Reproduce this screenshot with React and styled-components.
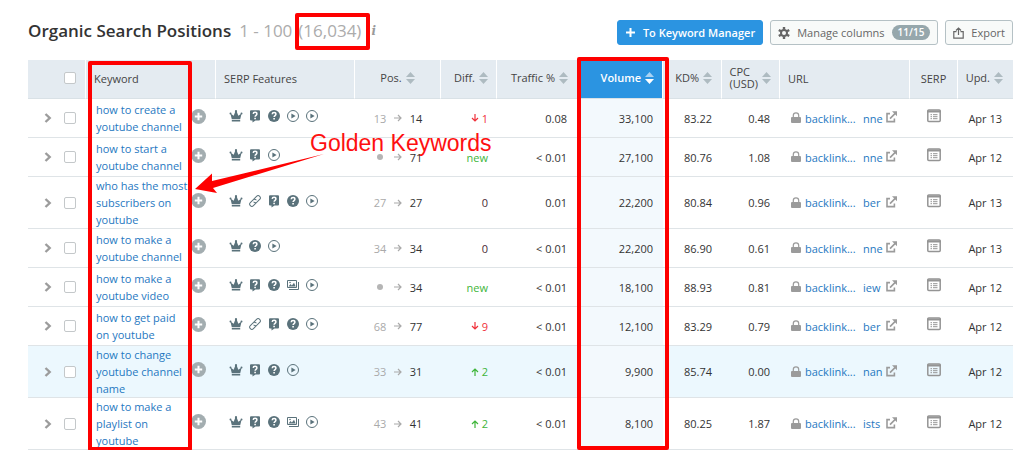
import React from 'react';
import styled, { createGlobalStyle } from 'styled-components';

const GlobalStyle = createGlobalStyle`
  * {
    box-sizing: border-box;
  }

  body {
    margin: 0;
    background: #fff;
    color: #333;
    font-family: 'Open Sans', 'Noto Sans', sans-serif;
    font-size: 11px;
    line-height: 17px;
  }

  svg {
    display: block;
    flex-shrink: 0;
  }
`;

const Page = styled.main`
  padding: 20px 11px 0 28px;
`;

const Toolbar = styled.header`
  display: flex;
  align-items: center;
  justify-content: space-between;
  min-height: 25px;
  margin-bottom: 15px;
`;

const Title = styled.h1`
  display: flex;
  align-items: center;
  margin: 0;
  padding-bottom: 3px;
  color: #333;
  font-size: 17px;
  font-weight: 600;
  line-height: 22px;
  white-space: nowrap;
`;

const Range = styled.span`
  margin-left: 8px;
  color: #acacac;
  font-weight: 400;
`;

const Total = styled.span`
  position: relative;
  margin-left: 6px;
  color: #acacac;
  font-weight: 400;

  &::after {
    content: '';
    position: absolute;
    inset: -7px -9px -8px -3px;
    border: 4px solid #fe0000;
    border-radius: 2px;
  }
`;

const Info = styled.span`
  margin-left: 10px;
  color: #9a9a9a;
  font-family: 'DejaVu Serif', serif;
  font-size: 12px;
  font-style: italic;
  font-weight: 700;
`;

const Actions = styled.div`
  display: flex;
  gap: 7px;
`;

const Button = styled.button`
  display: flex;
  align-items: center;
  gap: 7px;
  height: 25px;
  padding: 0 7px;
  border: 1px solid ${({ $primary }) => ($primary ? '#2b94e1' : '#b5c1c5')};
  border-radius: 3px;
  background: ${({ $primary }) => ($primary ? '#2b94e1' : '#f8faf9')};
  color: ${({ $primary }) => ($primary ? '#fff' : '#666')};
  font-family: inherit;
  font-size: 11px;
  font-weight: ${({ $primary }) => ($primary ? 600 : 400)};
  white-space: nowrap;
`;

const Badge = styled.span`
  padding: 0 6px;
  border-radius: 8px;
  background: #96a7ac;
  color: #fff;
  font-size: 10px;
  font-weight: 600;
  line-height: 15px;
`;

const TableWrap = styled.div`
  position: relative;
`;

const Table = styled.table`
  width: 100%;
  table-layout: fixed;
  border-collapse: separate;
  border-spacing: 0;
`;

const Col = styled.col`
  width: ${({ $width }) => $width};
`;

const aligns = { left: 'flex-start', center: 'center', right: 'flex-end' };

const HeadCell = styled.th`
  height: 39px;
  padding: 0 ${({ $right = 0 }) => $right}px 2px ${({ $left = 0 }) => $left}px;
  border-bottom: 1px solid #d9e1e6;
  border-right: 1px solid #fff;
  background: ${({ $active }) => ($active ? '#2b94e1' : '#e4ebf1')};
  color: ${({ $active }) => ($active ? '#fff' : '#444')};
  font-weight: ${({ $active }) => ($active ? 600 : 400)};
  text-align: ${({ $align = 'left' }) => $align};

  &:last-child {
    border-right: 0;
  }
`;

const SortButton = styled.button`
  display: flex;
  align-items: center;
  justify-content: ${({ $align }) => aligns[$align]};
  gap: 4px;
  width: 100%;
  padding: 0;
  border: 0;
  background: none;
  color: inherit;
  font: inherit;
  line-height: 12px;
  text-align: left;
  white-space: pre-line;
`;

const Row = styled.tr`
  background: ${({ $hovered }) => ($hovered ? '#ecf8fe' : '#fff')};
`;

const Cell = styled.td`
  height: 39px;
  padding: 0 ${({ $right = 0 }) => $right}px 0 ${({ $left = 0 }) => $left}px;
  border-bottom: 1px solid #dfe4e7;
  background: ${({ $active }) => ($active ? '#f3f9fd' : 'transparent')};
  text-align: ${({ $align = 'left' }) => $align};
  white-space: nowrap;
`;

const Select = styled.div`
  display: flex;
  align-items: center;
  justify-content: flex-end;
  gap: 12px;
`;

const Checkbox = styled.input`
  appearance: none;
  width: 12px;
  height: 12px;
  margin: 0;
  border: 1px solid #c4c8ca;
  border-radius: 2px;
  background: #fff;
`;

const IconButton = styled.button`
  display: inline-flex;
  flex-shrink: 0;
  padding: 0;
  border: 0;
  background: none;
  color: ${({ $color }) => $color};
`;

const KeywordBox = styled.div`
  display: flex;
  align-items: center;
  gap: 1px;
`;

const Keyword = styled.a`
  width: 94px;
  color: #1f78c1;
  text-decoration: none;
  white-space: normal;
`;

// icons sit a touch above the text line
const Lifted = styled.div`
  display: flex;
  justify-content: ${({ $align = 'left' }) => aligns[$align]};
  gap: 5px;
  padding-bottom: 4px;
  color: #5a727b;
`;

const Position = styled.div`
  display: grid;
  grid-template-columns: 14px 8px 14px;
  align-items: center;
  justify-content: center;
  justify-items: center;
  gap: 7px;
  color: #333;
`;

const Previous = styled.span`
  color: #aaa;
`;

const Dot = styled.span`
  width: 6px;
  height: 6px;
  border-radius: 50%;
  background: #b5b5b5;
`;

const diffColors = { up: '#3fb53a', new: '#3fb53a', down: '#f0303a', same: '#4a2a35' };

const Diff = styled.span`
  display: inline-flex;
  align-items: center;
  gap: 3px;
  color: ${({ $kind }) => diffColors[$kind]};
`;

const UrlBox = styled.div`
  display: flex;
  align-items: center;
  gap: 3px;
  color: #9b9b9b;
`;

const UrlLink = styled.a`
  display: grid;
  grid-template-columns: 56px 20px;
  gap: 2px;
  padding-left: 1px;
  color: #1f78c1;
  text-decoration: none;
`;

const Outline = styled.div`
  position: absolute;
  top: ${({ $top }) => $top}px;
  bottom: ${({ $bottom }) => $bottom}px;
  left: ${({ $left }) => $left};
  right: ${({ $right }) => $right};
  width: ${({ $width }) => $width}px;
  border: 4px solid #fe0000;
  border-radius: 2px;
  pointer-events: none;
`;

const Callout = styled.div`
  position: absolute;
  top: 70px;
  left: 282px;
  color: #fe1010;
  font-family: 'Liberation Sans', sans-serif;
  font-size: 23px;
  line-height: 26px;
  white-space: nowrap;
  pointer-events: none;
`;

const Pointer = styled.svg`
  position: absolute;
  top: 90px;
  left: 166px;
  pointer-events: none;
`;

const Sorter = ({ active }) => (
  <svg width="9" height="12" viewBox="0 0 9 12">
    <path d="M4.5 0 9 5H0z" fill={active ? '#a9d3f3' : '#aebbc1'} />
    <path d="M4.5 12 9 7H0z" fill={active ? '#fff' : '#aebbc1'} />
  </svg>
);

const Chevron = () => (
  <svg width="8" height="10" viewBox="0 0 8 10" fill="none" stroke="currentColor" strokeWidth="2.4">
    <path d="M1.5 1 5.7 5 1.5 9" />
  </svg>
);

const PlusCircle = () => (
  <svg width="15" height="15" viewBox="0 0 15 15">
    <circle cx="7.5" cy="7.5" r="7.5" fill="currentColor" />
    <path d="M7.5 3.8v7.4M3.8 7.5h7.4" stroke="#fff" strokeWidth="2" />
  </svg>
);

const Crown = () => (
  <svg width="14" height="14" viewBox="0 0 14 14" fill="currentColor">
    <path d="M1.400 4.400 4.700 6.800 6.500 2h1l1.800 4.800 3.300-2.400-1.400 5.900H2.800zM2.800 11h8.400v1.500H2.800z" />
    <circle cx="7" cy="2.200" r="1.100" />
    <circle cx="1.500" cy="4.400" r="1" />
    <circle cx="12.500" cy="4.400" r="1" />
  </svg>
);

const QuestionMark = () => (
  <>
    <path
      d="M5.200 5.200c.1-2.200 3.700-2.200 3.700 0 0 1.400-1.800 1.400-1.800 2.900"
      fill="none"
      stroke="#fff"
      strokeWidth="1.500"
    />
    <path d="M6.300 9h1.600v1.500H6.300z" fill="#fff" />
  </>
);

const Snippet = () => (
  <svg width="14" height="14" viewBox="0 0 14 14">
    <path
      d="M3 1.200h8a1 1 0 0 1 1 1v8.200a1 1 0 0 1-1 1H7.500L4.500 13.500v-2.100H3a1 1 0 0 1-1-1V2.200a1 1 0 0 1 1-1z"
      fill="currentColor"
    />
    <g transform="translate(0 -.3)">
      <QuestionMark />
    </g>
  </svg>
);

const Question = () => (
  <svg width="14" height="14" viewBox="0 0 14 14">
    <circle cx="7" cy="7" r="6" fill="currentColor" />
    <QuestionMark />
  </svg>
);

const Play = () => (
  <svg width="14" height="14" viewBox="0 0 14 14">
    <circle cx="7" cy="7" r="5.500" fill="none" stroke="currentColor" />
    <path d="M5.400 4.500 9.600 7 5.400 9.500z" fill="currentColor" />
  </svg>
);

const Chain = () => (
  <svg width="14" height="14" viewBox="0 0 14 14" fill="none" stroke="currentColor">
    <g transform="rotate(-45 7 7)">
      <path d="M6.500 9.200H2.600a2.200 2.200 0 0 1 0-4.400h3.900a2.200 2.200 0 0 1 2 2.700" />
      <path d="M7.500 4.800h3.900a2.200 2.200 0 0 1 0 4.400H7.500a2.200 2.200 0 0 1-2-2.700" />
    </g>
  </svg>
);

const Images = () => (
  <svg width="14" height="14" viewBox="0 0 14 14">
    <path d="M1.500 2.500h9v7h-9zM12.500 4v7.500H3" fill="none" stroke="currentColor" />
    <path d="m2.500 8.500 2-2.500 1.400 1.400L8 4.800l1.700 3.700z" fill="currentColor" />
    <circle cx="4" cy="4.500" r=".8" fill="currentColor" />
  </svg>
);

const Arrow = ({ angle = 0 }) => (
  <svg width="8" height="8" viewBox="0 0 8 8" fill="none" stroke="currentColor">
    <path d="M0 4h7M4 1l3 3-3 3" transform={`rotate(${angle} 4 4)`} strokeWidth="1.200" />
  </svg>
);

const Lock = () => (
  <svg width="10" height="12" viewBox="0 0 10 12">
    <path d="M2.300 6V3.600a2.700 2.700 0 0 1 5.400 0V6" fill="none" stroke="currentColor" strokeWidth="1.200" />
    <rect y="5" width="10" height="6" rx="1" fill="currentColor" />
  </svg>
);

const External = () => (
  <svg width="12" height="14" viewBox="0 0 12 14" fill="none" stroke="currentColor" strokeWidth="1.600">
    <path d="M4 2.600H1v8h7.400V7.500M4 7.600l5.500-5.500" />
    <path d="M6 .2h5v5z" fill="currentColor" stroke="none" />
  </svg>
);

const Serp = () => (
  <svg width="14" height="14" viewBox="0 0 14 14">
    <rect x=".8" y="1" width="12.400" height="11.500" rx="1" fill="none" stroke="currentColor" strokeWidth="1.500" />
    <path d="M0 1.500h14v2H0z" fill="currentColor" />
    <path
      d="M3.500 5.700H5M6 5.700h4.500M3.500 7.700H5M6 7.700h4.500M3.500 9.700H5M6 9.700h4.500"
      stroke="currentColor"
    />
  </svg>
);

const Plus = () => (
  <svg width="11" height="11" viewBox="0 0 11 11" stroke="currentColor" strokeWidth="2">
    <path d="M5.500 1v9M1 5.500h9" />
  </svg>
);

const Gear = () => (
  <svg width="12" height="12" viewBox="0 0 12 12" fill="none" stroke="currentColor">
    <circle cx="6" cy="6" r="3" strokeWidth="2" />
    <path
      d="M6 0v2.500M6 9.500V12M.8 3l2.200 1.300M9 7.700 11.200 9M.8 9 3 7.700M9 4.300 11.200 3"
      strokeWidth="2.400"
    />
  </svg>
);

const Export = () => (
  <svg width="11" height="12" viewBox="0 0 11 12" fill="none" stroke="currentColor" strokeWidth="1.200">
    <path d="M3.500 4.600H.8v6.600h9.400V4.600H7.500M5.500 8V1M3 3.500 5.500 1 8 3.500" />
  </svg>
);

const featureIcons = {
  crown: Crown,
  snippet: Snippet,
  question: Question,
  play: Play,
  chain: Chain,
  images: Images,
};

const columns = [
  { label: 'Pos.', align: 'center', sort: true, width: '86px' },
  { label: 'Diff.', align: 'right', sort: true, width: '56px', right: 8 },
  { label: 'Traffic %', align: 'right', sort: true, width: '83px', right: 11 },
  { label: 'Volume', align: 'right', sort: true, width: '83px', right: 8, active: true },
  { label: 'KD%', align: 'right', sort: true, width: '59px', right: 9 },
  { label: 'CPC\n(USD)', align: 'right', sort: true, width: '58px', right: 8 },
  { label: 'URL', align: 'left', width: '130px', left: 8 },
  { label: 'SERP', align: 'center', width: '48px' },
  { label: 'Upd.', align: 'right', sort: true, width: '55px', right: 10 },
];

const rows = [
  {
    keyword: 'how to create a youtube channel',
    features: ['crown', 'snippet', 'question', 'play', 'play'],
    from: 13, to: 14, kind: 'down', diff: '1', traffic: '0.08',
    volume: '33,100', kd: '83.22', cpc: '0.48', url: 'nne', updated: 'Apr 13',
  },
  {
    keyword: 'how to start a youtube channel',
    features: ['crown', 'snippet', 'play'],
    to: 71, kind: 'new', diff: 'new', traffic: '< 0.01',
    volume: '27,100', kd: '80.76', cpc: '1.08', url: 'nne', updated: 'Apr 12',
  },
  {
    keyword: 'who has the most subscribers on youtube',
    features: ['crown', 'chain', 'snippet', 'question', 'play'],
    from: 27, to: 27, kind: 'same', diff: '0', traffic: '0.01',
    volume: '22,200', kd: '80.84', cpc: '0.96', url: 'ber', updated: 'Apr 13',
  },
  {
    keyword: 'how to make a youtube channel',
    features: ['crown', 'question', 'play'],
    from: 34, to: 34, kind: 'same', diff: '0', traffic: '< 0.01',
    volume: '22,200', kd: '86.90', cpc: '0.61', url: 'nne', updated: 'Apr 13',
  },
  {
    keyword: 'how to make a youtube video',
    features: ['crown', 'snippet', 'question', 'images', 'play'],
    to: 34, kind: 'new', diff: 'new', traffic: '< 0.01',
    volume: '18,100', kd: '88.93', cpc: '0.81', url: 'iew', updated: 'Apr 12',
  },
  {
    keyword: 'how to get paid on youtube',
    features: ['crown', 'chain', 'snippet', 'question', 'play'],
    from: 68, to: 77, kind: 'down', diff: '9', traffic: '< 0.01',
    volume: '12,100', kd: '83.29', cpc: '0.79', url: 'ber', updated: 'Apr 12',
  },
  {
    keyword: 'how to change youtube channel name',
    features: ['crown', 'snippet', 'question', 'play'],
    from: 33, to: 31, kind: 'up', diff: '2', traffic: '< 0.01',
    volume: '9,900', kd: '85.74', cpc: '0.00', url: 'nan', updated: 'Apr 12', hovered: true,
  },
  {
    keyword: 'how to make a playlist on youtube',
    features: ['crown', 'snippet', 'question', 'images', 'play'],
    from: 43, to: 41, kind: 'up', diff: '2', traffic: '< 0.01',
    volume: '8,100', kd: '80.25', cpc: '1.87', url: 'ists', updated: 'Apr 12',
  },
];

const KeywordRow = ({ row }) => (
  <Row $hovered={row.hovered}>
    <Cell $right={10}>
      <Select>
        <IconButton type="button" $color="#9c9c9c" aria-label={`Expand ${row.keyword}`}>
          <Chevron />
        </IconButton>
        <Checkbox type="checkbox" aria-label={`Select ${row.keyword}`} />
      </Select>
    </Cell>
    <Cell $left={10}>
      <KeywordBox>
        <Keyword href="#">{row.keyword}</Keyword>
        <Lifted>
          <IconButton type="button" $color="#a3adb0" aria-label={`Add ${row.keyword}`}>
            <PlusCircle />
          </IconButton>
        </Lifted>
      </KeywordBox>
    </Cell>
    <Cell $left={13}>
      <Lifted>
        {row.features.map((name, index) => {
          const Icon = featureIcons[name];
          return <Icon key={index} />;
        })}
      </Lifted>
    </Cell>
    <Cell>
      <Position>
        {row.from ? <Previous>{row.from}</Previous> : <Dot />}
        <Previous>
          <Arrow />
        </Previous>
        <span>{row.to}</span>
      </Position>
    </Cell>
    <Cell $align="right" $right={9}>
      <Diff $kind={row.kind}>
        {row.kind === 'down' && <Arrow angle={90} />}
        {row.kind === 'up' && <Arrow angle={-90} />}
        {row.diff}
      </Diff>
    </Cell>
    <Cell $align="right" $right={13}>{row.traffic}</Cell>
    <Cell $align="right" $right={10} $active>{row.volume}</Cell>
    <Cell $align="right" $right={10}>{row.kd}</Cell>
    <Cell $align="right" $right={10}>{row.cpc}</Cell>
    <Cell $left={11}>
      <UrlBox>
        <Lock />
        <UrlLink href="#">
          <span>backlink...</span>
          <span>{row.url}</span>
        </UrlLink>
        <External />
      </UrlBox>
    </Cell>
    <Cell>
      <Lifted $align="center">
        <IconButton type="button" $color="#949494" aria-label={`View SERP for ${row.keyword}`}>
          <Serp />
        </IconButton>
      </Lifted>
    </Cell>
    <Cell $align="right" $right={11}>{row.updated}</Cell>
  </Row>
);

const App = () => (
  <Page>
    <GlobalStyle />
    <Toolbar>
      <Title>
        Organic Search Positions
        <Range>1 - 100</Range>
        <Total>(16,034)</Total>
        <Info>i</Info>
      </Title>
      <Actions>
        <Button type="button" $primary>
          <Plus />
          To Keyword Manager
        </Button>
        <Button type="button">
          <Gear />
          Manage columns
          <Badge>11/15</Badge>
        </Button>
        <Button type="button">
          <Export />
          Export
        </Button>
      </Actions>
    </Toolbar>
    <TableWrap>
      <Table>
        <colgroup>
          <Col $width="58px" />
          <Col $width="130px" />
          <Col $width="auto" />
          {columns.map(column => (
            <Col key={column.label} $width={column.width} />
          ))}
        </colgroup>
        <thead>
          <tr>
            <HeadCell $right={9}>
              <Select>
                <Checkbox type="checkbox" aria-label="Select all keywords" />
              </Select>
            </HeadCell>
            <HeadCell $left={8}>Keyword</HeadCell>
            <HeadCell $left={8}>SERP Features</HeadCell>
            {columns.map(({ label, align, sort, left, right, active }) => (
              <HeadCell key={label} $align={align} $left={left} $right={right} $active={active}>
                {sort ? (
                  <SortButton type="button" $align={align}>
                    {label}
                    <Sorter active={active} />
                  </SortButton>
                ) : (
                  label
                )}
              </HeadCell>
            ))}
          </tr>
        </thead>
        <tbody>
          {rows.map(row => (
            <KeywordRow key={row.keyword} row={row} />
          ))}
        </tbody>
      </Table>
      <Outline $top={1} $bottom={-1} $left="60px" $width={104} />
      <Outline $top={-3} $bottom={0} $right="344px" $width={92} />
      <Pointer width="132" height="48" viewBox="0 0 132 48">
        <path d="M1 39 18 23.500v7.500L130 4 19 38l4 5z" fill="#fe0000" />
      </Pointer>
      <Callout>Golden Keywords</Callout>
    </TableWrap>
  </Page>
);

export default App;
